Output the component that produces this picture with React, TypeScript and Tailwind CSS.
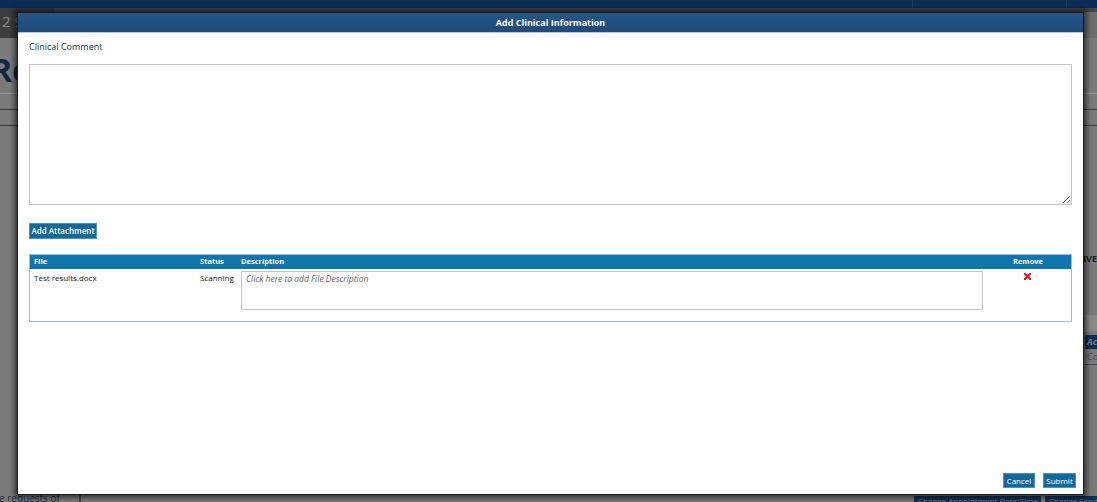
import React from "react";

const font = { fontFamily: '"Open Sans", "Noto Sans", sans-serif' };

function RedX() {
  return (
    <svg width="7" height="7" viewBox="0 0 8 8">
      <path d="M1 1 L7 7 M7 1 L1 7" stroke="#e8141b" strokeWidth="2.4" strokeLinecap="square" />
    </svg>
  );
}

export default function App() {
  return (
    <div className="relative w-[1097px] h-[502px] overflow-hidden bg-[#7b7b7b]" style={font}>
      {/* background page (dimmed) */}
      <div className="flex flex-col w-full h-full">
        <div className="h-[8px] bg-[#0d2c55] flex">
          <div className="w-[913px] border-r border-[#1f3f66]" />
          <div className="w-[154px] border-r border-[#1f3f66]" />
        </div>
        <div className="flex h-[30px]">
          <div className="w-[55px] bg-[#3d3d3d] text-[#8a8a8a] text-[15px] pl-[2px] pt-[6px] leading-none">2 9</div>
          <div className="flex-1 flex flex-col">
            <div className="h-[4px] bg-[#464646]" />
            <div className="flex-1 bg-[#6e6e6e]" />
          </div>
        </div>
        <div className="h-[25px] pt-[16px]">
          <div className="text-[32px] font-bold text-[#0f2744] leading-none -ml-[9px]">Re</div>
        </div>
        <div className="h-[30px]" />
        <div className="border-t border-[#9a9a9a] h-[16px]" />
        <div className="border-t border-[#3a3a3a] h-[16px]" />
        <div className="border-t border-[#3a3a3a] flex-1 relative">
          <div className="absolute right-0 top-[126px] text-[9px] font-bold text-[#1a1a1a]">IVE</div>
          <div className="absolute right-0 top-[189px] w-[12px] h-[16px] bg-[#8a8a8a]" />
          <div className="absolute right-0 top-[209px] w-[12px] h-[14px] bg-[#0d2d4f] text-[9px] italic font-bold text-[#6e86a0] pl-[2px]">Ac</div>
          <div className="absolute right-0 top-[224px] w-[12px] h-[15px] border-b border-[#4a4a4a] text-[9px] text-[#3a4a60] pl-[2px]">Co</div>
        </div>
        <div className="h-[7px] flex items-end">
          <div className="w-[80px] text-[10px] text-[#1c2c44] leading-[7px] overflow-hidden h-[7px] -ml-[1px]">e requests of</div>
          <div className="w-[2px] h-[7px] bg-[#444]" />
          <div className="flex-1" />
          <div className="w-[127px] h-[6px] bg-[#10324f] text-[8px] text-[#5c7ea0] leading-[10px] overflow-hidden pl-[4px] mr-[4px] whitespace-nowrap">Change Appointment Date/Time</div>
          <div className="w-[52px] h-[6px] bg-[#10324f] text-[8px] text-[#5c7ea0] leading-[10px] overflow-hidden pl-[4px] whitespace-nowrap">Change Servi</div>
        </div>
      </div>

      {/* modal */}
      <div className="absolute left-[17px] top-[12px] w-[1067px] h-[483px] bg-white border border-[#1a1a1a] shadow-[0_0_5px_3px_rgba(0,0,0,0.55)] flex flex-col">
        <div className="h-[20px] bg-gradient-to-b from-[#245489] to-[#1f4b78] border-b border-[#b9cbdc] flex items-center justify-center text-white text-[9px] font-bold shrink-0">
          Add Clinical Information
        </div>
        <div className="flex-1 flex flex-col px-[11px]">
          <div className="mt-[8px] text-[9px] text-[#1c3350] leading-[12px]">Clinical Comment</div>
          <textarea className="mt-[11px] h-[141px] w-full border border-[#c4c4c4] outline-none resize-y block shrink-0" />
          <div className="mt-[18px] flex">
            <button className="h-[16px] w-[68px] bg-[#126a9c] border border-[#4b93c2] text-white text-[8px] font-semibold leading-none flex items-center justify-center">
              Add Attachment
            </button>
          </div>
          <div className="mt-[15px] border border-[#8fc3df] h-[68px] flex flex-col shrink-0">
            <div className="h-[14px] bg-[#0e76ab] flex items-center text-white text-[7.5px] font-bold shrink-0">
              <div className="w-[170px] pl-[4px]">File</div>
              <div className="w-[41px]">Status</div>
              <div className="flex-1">Description</div>
              <div className="w-[86px] text-center">Remove</div>
            </div>
            <div className="flex text-[8px] text-[#1a1a1a] pt-[2px] leading-[12px]">
              <div className="w-[170px] pl-[4px] pt-[1px]">Test results.docx</div>
              <div className="w-[41px] pt-[1px]">Scanning</div>
              <div className="flex-1">
                <div className="w-[742px] h-[39px] border border-[#c4c4c4] text-[#666] italic text-[8.5px] pl-[4px] pt-[1px]">
                  Click here to add File Description
                </div>
              </div>
              <div className="w-[86px] flex justify-center pt-[2px] pr-[1px]">
                <RedX />
              </div>
            </div>
          </div>
          <div className="flex-1" />
          <div className="flex justify-end gap-[8px] mb-[6px] -mr-[4px]">
            <button className="h-[15px] w-[32px] bg-[#12689a] border border-[#4b93c2] text-white text-[8px] leading-none flex items-center justify-center">Cancel</button>
            <button className="h-[15px] w-[33px] bg-[#12689a] border border-[#4b93c2] text-white text-[8px] leading-none flex items-center justify-center">Submit</button>
          </div>
        </div>
      </div>
    </div>
  );
}
